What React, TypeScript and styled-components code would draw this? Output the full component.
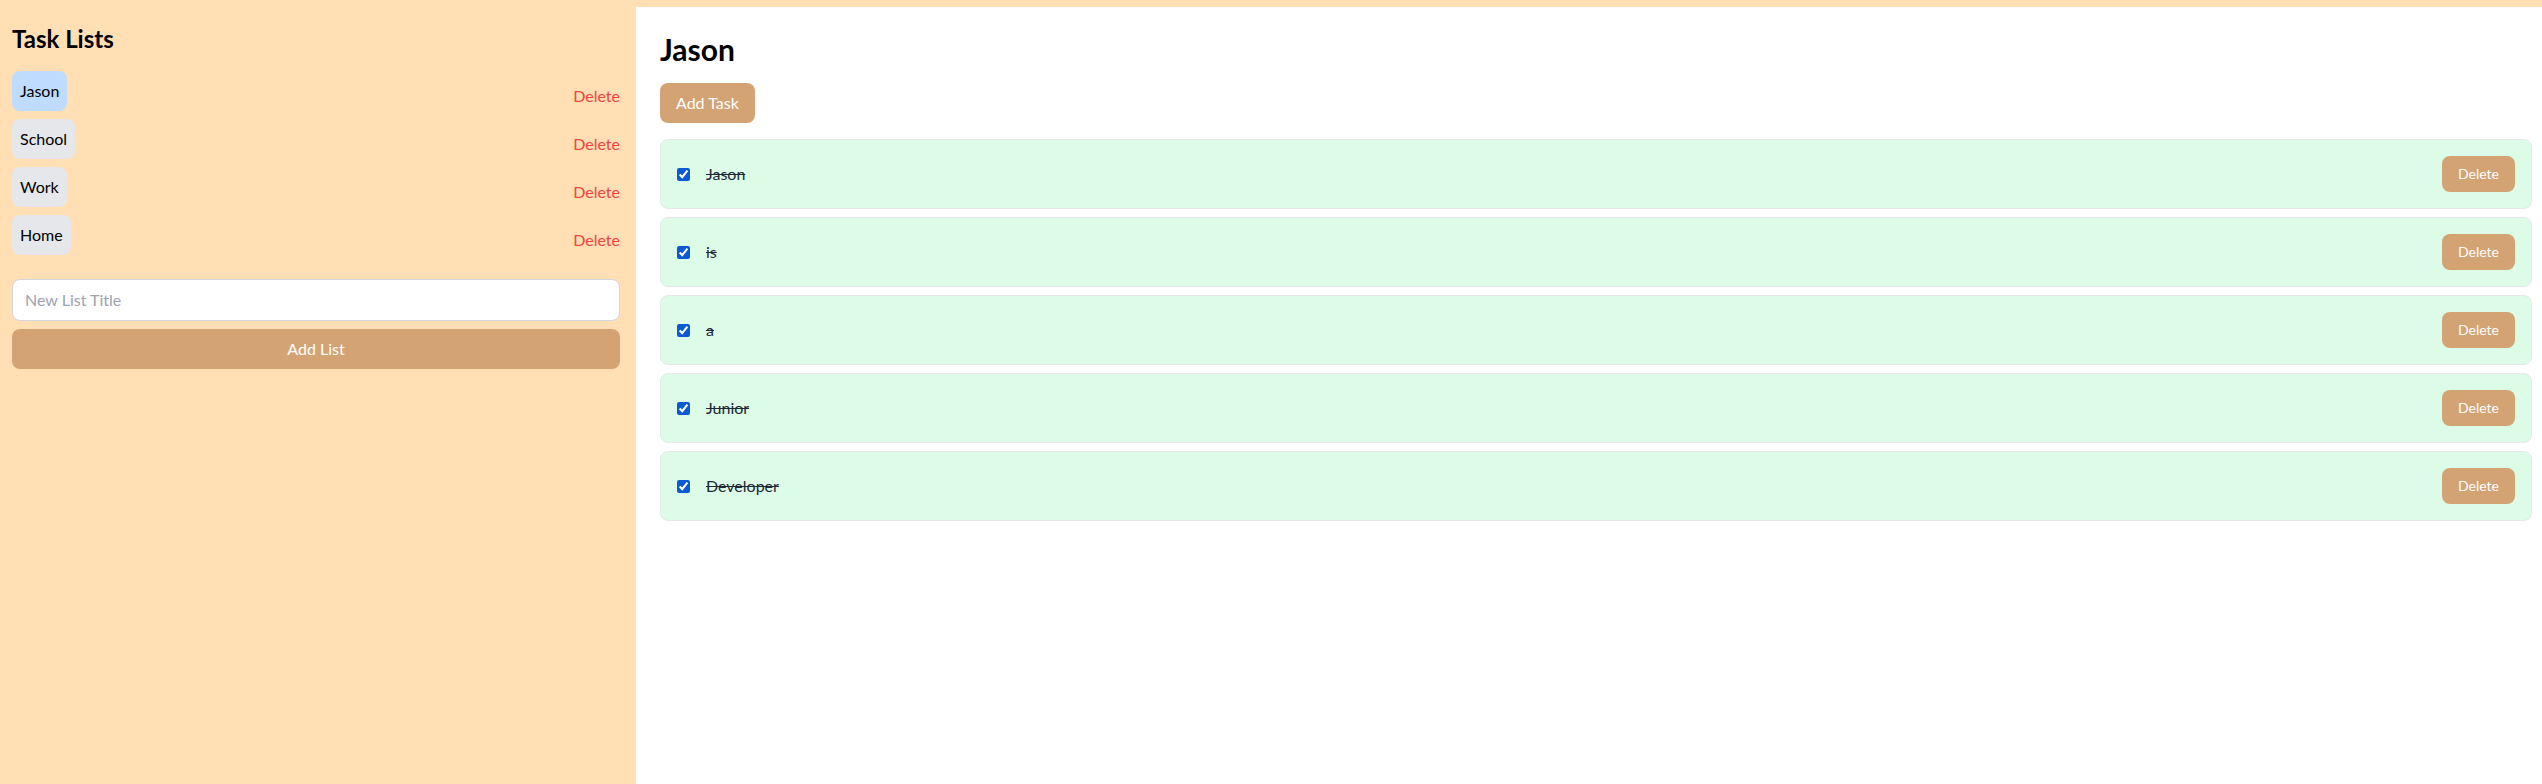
import React, { useState } from 'react';
import styled, { createGlobalStyle } from 'styled-components';

const GlobalStyle = createGlobalStyle`
  *, *::before, *::after {
    box-sizing: border-box;
  }

  body {
    margin: 0;
    background-color: #ffdfb3;
    font-family: Lato, 'Liberation Sans', sans-serif;
    color: #000;
  }
`;

const Page = styled.div`
  display: flex;
  min-height: 100vh;
  padding-top: 7px;
`;

const Sidebar = styled.aside`
  flex: 0 0 636px;
  background-color: #ffdfb3;
  padding: 16px 16px 16px 12px;
`;

const SidebarTitle = styled.h2`
  margin: 0 0 16px;
  font-size: 24px;
  line-height: 32px;
  font-weight: 700;
`;

const ListItems = styled.ul`
  list-style: none;
  margin: 0 0 16px;
  padding: 0;
`;

const ListRow = styled.li`
  display: flex;
  justify-content: space-between;
  align-items: center;
`;

const ListPill = styled.button<{ $active: boolean }>`
  margin: 0 0 8px;
  padding: 8px;
  border: none;
  border-radius: 8px;
  background-color: ${(p) => (p.$active ? '#bfdbfe' : '#e5e7eb')};
  font-family: inherit;
  font-size: 16px;
  line-height: 24px;
  color: #000;
  cursor: pointer;
`;

const ListDelete = styled.button`
  padding: 2px 0 0;
  border: none;
  background: none;
  font-family: inherit;
  font-size: 16px;
  line-height: 24px;
  color: #ef4444;
  cursor: pointer;
`;

const TitleInput = styled.input`
  display: block;
  width: 100%;
  margin: 0;
  padding: 8px 12px;
  border: 1px solid #d1d5db;
  border-radius: 8px;
  background: #fff;
  font-family: inherit;
  font-size: 16px;
  line-height: 24px;
  outline: none;

  &::placeholder {
    color: #9ca3af;
  }
`;

const TanButton = styled.button`
  border: none;
  border-radius: 8px;
  background-color: #d4a373;
  color: #fff;
  font-family: inherit;
  cursor: pointer;
`;

const AddListButton = styled(TanButton)`
  display: block;
  width: 100%;
  margin-top: 8px;
  padding: 8px 16px;
  font-size: 16px;
  line-height: 24px;
`;

const Main = styled.main`
  flex: 1;
  background-color: #fff;
  padding: 24px 10px 24px 24px;
`;

const MainTitle = styled.h1`
  margin: 0 0 16px;
  font-size: 30px;
  line-height: 36px;
  font-weight: 700;
`;

const AddTaskButton = styled(TanButton)`
  margin-bottom: 16px;
  padding: 8px 16px;
  font-size: 16px;
  line-height: 24px;
`;

const TaskList = styled.div`
  display: flex;
  flex-direction: column;
  gap: 8px;
`;

const TaskCard = styled.div`
  display: flex;
  justify-content: space-between;
  align-items: center;
  padding: 16px;
  border: 1px solid #e5e7eb;
  border-radius: 8px;
  background-color: #dcfce7;
`;

const TaskLabel = styled.label`
  display: flex;
  align-items: center;
  gap: 16px;
`;

const TaskCheck = styled.input`
  width: 13px;
  height: 13px;
  margin: 0;
  accent-color: #0b5ad4;
`;

const TaskText = styled.span<{ $done: boolean }>`
  font-size: 16px;
  line-height: 24px;
  color: #1f2937;
  text-decoration: ${(p) => (p.$done ? 'line-through' : 'none')};
`;

const TaskDelete = styled(TanButton)`
  padding: 8px 16px;
  font-size: 14px;
  line-height: 20px;
`;

const initialLists = ['Jason', 'School', 'Work', 'Home'];

const initialTasks = [
  { id: 1, text: 'Jason', done: true },
  { id: 2, text: 'is', done: true },
  { id: 3, text: 'a', done: true },
  { id: 4, text: 'Junior', done: true },
  { id: 5, text: 'Developer', done: true },
];

const App: React.FC = () => {
  const [lists, setLists] = useState<string[]>(initialLists);
  const [activeList, setActiveList] = useState<string>('Jason');
  const [newTitle, setNewTitle] = useState<string>('');
  const [tasks, setTasks] = useState(initialTasks);

  const addList = () => {
    if (!newTitle.trim()) return;
    setLists([...lists, newTitle.trim()]);
    setNewTitle('');
  };

  const toggleTask = (id: number) => {
    setTasks(tasks.map((t) => (t.id === id ? { ...t, done: !t.done } : t)));
  };

  return (
    <>
      <GlobalStyle />
      <Page>
        <Sidebar>
          <SidebarTitle>Task Lists</SidebarTitle>
          <ListItems>
            {lists.map((name) => (
              <ListRow key={name}>
                <ListPill $active={name === activeList} onClick={() => setActiveList(name)}>
                  {name}
                </ListPill>
                <ListDelete onClick={() => setLists(lists.filter((l) => l !== name))}>
                  Delete
                </ListDelete>
              </ListRow>
            ))}
          </ListItems>
          <TitleInput
            placeholder="New List Title"
            value={newTitle}
            onChange={(e) => setNewTitle(e.target.value)}
          />
          <AddListButton onClick={addList}>Add List</AddListButton>
        </Sidebar>

        <Main>
          <MainTitle>{activeList}</MainTitle>
          <AddTaskButton>Add Task</AddTaskButton>
          <TaskList>
            {tasks.map((task) => (
              <TaskCard key={task.id}>
                <TaskLabel>
                  <TaskCheck
                    type="checkbox"
                    checked={task.done}
                    onChange={() => toggleTask(task.id)}
                  />
                  <TaskText $done={task.done}>{task.text}</TaskText>
                </TaskLabel>
                <TaskDelete onClick={() => setTasks(tasks.filter((t) => t.id !== task.id))}>
                  Delete
                </TaskDelete>
              </TaskCard>
            ))}
          </TaskList>
        </Main>
      </Page>
    </>
  );
};

export default App;
